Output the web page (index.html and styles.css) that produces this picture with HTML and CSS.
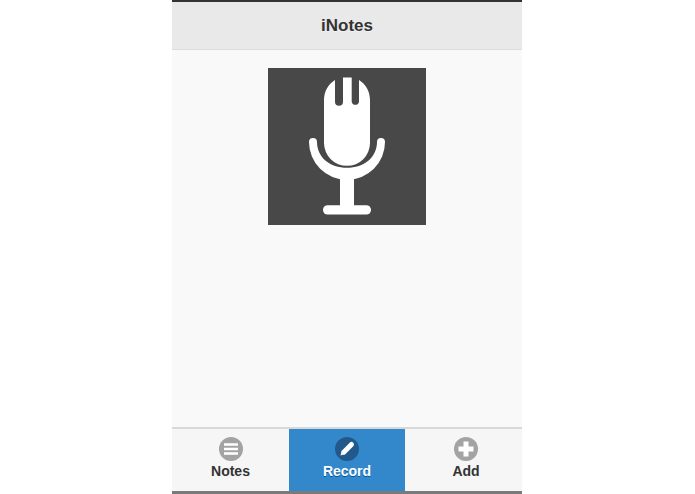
FILE: index.html
```html
<!DOCTYPE html>
<html lang="en">
<head>
<meta charset="utf-8">
<title>iNotes</title>
<link rel="stylesheet" href="styles.css">
</head>
<body>
<div class="app">
  <header class="header"><h1 class="title">iNotes</h1></header>
  <main class="content">
    <svg class="mic" viewBox="0 0 158 158" preserveAspectRatio="none" role="img" aria-label="Microphone">
      <rect width="158" height="158" fill="#484848"/>
      <path fill="#fff" d="M67 12V34a4 4 0 0 0 8 0V9.500h8.700V34a3.700 3.700 0 0 0 7.300 0V12C97.500 16 102 23 102 32.500V75.500a23 23 0 0 1-46 0V32.500C56 23 60.500 16 67 12Z"/>
      <path fill="#fff" d="M41 74.500a4 4 0 0 1 8 0C49 90 62 100.500 79 100.500S109 90 109 74.500a4 4 0 0 1 8 0A38 38 0 0 1 41 74.500Z"/>
      <rect x="72" y="110" width="14" height="32" fill="#fff"/>
      <rect x="55" y="138" width="48" height="9.500" rx="4.700" fill="#fff"/>
    </svg>
  </main>
  <nav class="tabs">
    <a class="tab">
      <svg class="icon" viewBox="0 0 24 24"><circle cx="12" cy="12" r="12" fill="#a3a3a3"/><path stroke="#fff" stroke-width="2.400" d="M5 7.500h14M5 12h14M5 16.500h14"/></svg>
      <span>Notes</span>
    </a>
    <a class="tab active">
      <svg class="icon" viewBox="0 0 24 24"><circle cx="12" cy="12" r="12" fill="#22598a"/><path fill="#fff" d="M5.500 18.500 7 13l3.800 3.800Z"/><path stroke="#fff" stroke-width="5" stroke-linecap="round" d="M9 15 16.500 7.500"/></svg>
      <span>Record</span>
    </a>
    <a class="tab tab-add">
      <svg class="icon" viewBox="0 0 24 24"><circle cx="12" cy="12" r="12" fill="#a3a3a3"/><path stroke="#fff" stroke-width="5" d="M12 4.500v15M4.500 12h15"/></svg>
      <span>Add</span>
    </a>
  </nav>
  <div class="edge"></div>
</div>
</body>
</html>
```
FILE: styles.css
```css
html, body { margin: 0; height: 100%; background: #fff; }
body { overflow: hidden; font-family: "Liberation Sans", Arial, sans-serif; }
.app { width: 350px; height: 494px; margin-left: 172px; display: flex; flex-direction: column; background: #f9f9f9; border-top: 2px solid #333; box-sizing: border-box; }
.header { height: 48px; flex: none; display: flex; align-items: center; justify-content: center; background: #e9e9e9; border-bottom: 1px solid #ddd; box-sizing: border-box; }
.title { margin: 0; font-size: 17px; font-weight: bold; color: #333; text-shadow: 0 1px 0 #f3f3f3; }
.content { flex: 1; display: flex; justify-content: center; align-items: flex-start; padding-top: 18px; }
.mic { width: 158px; height: 157px; display: block; }
.tabs { flex: none; height: 64px; display: grid; grid-template-columns: 117px 116px 117px; background: #f6f6f6; border-top: 2px solid #d8d8d8; box-sizing: border-box; }
.tab { display: flex; flex-direction: column; align-items: center; padding-top: 8px; gap: 2px; font-size: 14px; font-weight: bold; color: #333; text-shadow: 0 1px 0 #f3f3f3; }
.tab-add { padding-left: 5px; }
.active { background: #38c; color: #fff; text-shadow: 0 1px 0 #059; }
.icon { width: 24px; height: 24px; display: block; }
.edge { flex: none; height: 3px; background: #7a7a7a; }
```
